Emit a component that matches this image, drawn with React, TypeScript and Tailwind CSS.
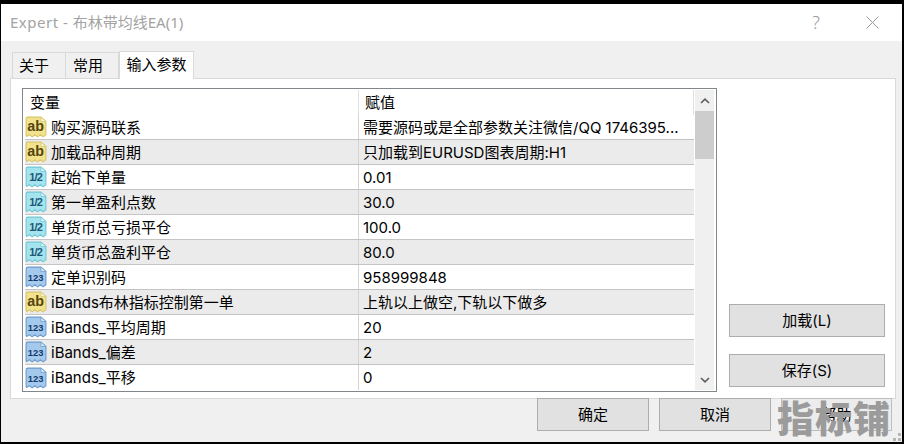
import React from "react";

const FONT = "font-['Inter','Noto_Sans_CJK_SC',sans-serif]";

type Kind = "ab" | "half" | "num";

function ParamIcon({ kind }: { kind: Kind }) {
  const c =
    kind === "ab"
      ? { fill: "#f2e28c", edge: "#d8c76e", light: "#fdf6c8", text: "#54450f" }
      : kind === "half"
      ? { fill: "#a4e4ef", edge: "#74c6d4", light: "#dcf7fb", text: "#1c5a76" }
      : { fill: "#a5c9ed", edge: "#6c9ccb", light: "#dbeaf9", text: "#103a6c" };
  return (
    <svg width="22" height="22" viewBox="0.5 0.5 20 20" className="shrink-0 -mr-px">
      <path
        d="M1.5 3 Q1.5 1.5 3 1.5 H15 L19.5 5.5 V17.5 L17 19.5 L14.5 17.5 L12 19.5 L9.5 17.5 L7 19.5 L4.5 17.5 L2 19 L1.5 18 Z"
        fill={c.fill}
        stroke={c.edge}
        strokeWidth="1"
      />
      <path d="M15 1.5 V5.5 H19.5 Z" fill={c.light} stroke={c.edge} strokeWidth="0.7" />
      <text
        x="10.2"
        y={kind === "ab" ? 14.5 : 14}
        textAnchor="middle"
        fontSize={kind === "ab" ? 13 : kind === "half" ? 10 : 8.5}
        fontWeight="700"
        fill={c.text}
        fontFamily="Liberation Sans, sans-serif"
        letterSpacing={kind === "half" ? -0.8 : 0}
      >
        {kind === "ab" ? "ab" : kind === "half" ? "1/2" : "123"}
      </text>
    </svg>
  );
}

const rows: { k: Kind; n: string; v: string }[] = [
  { k: "ab", n: "购买源码联系", v: "需要源码或是全部参数关注微信/QQ 1746395..." },
  { k: "ab", n: "加载品种周期", v: "只加载到EURUSD图表周期:H1" },
  { k: "half", n: "起始下单量", v: "0.01" },
  { k: "half", n: "第一单盈利点数", v: "30.0" },
  { k: "half", n: "单货币总亏损平仓", v: "100.0" },
  { k: "half", n: "单货币总盈利平仓", v: "80.0" },
  { k: "num", n: "定单识别码", v: "958999848" },
  { k: "ab", n: "iBands布林指标控制第一单", v: "上轨以上做空,下轨以下做多" },
  { k: "num", n: "iBands_平均周期", v: "20" },
  { k: "num", n: "iBands_偏差", v: "2" },
  { k: "num", n: "iBands_平移", v: "0" },
];

function Btn({ label, className = "" }: { label: string; className?: string }) {
  return (
    <div className={`h-[33px] pt-px flex items-center justify-center text-[15px] text-black border ${className}`}>
      {label}
    </div>
  );
}

export default function App() {
  return (
    <div className={`w-[904px] h-[444px] bg-black pt-[4px] pb-[2px] pl-px pr-[2px] overflow-hidden ${FONT}`}>
      <div className="relative h-full flex flex-col bg-[#f0f0f0]">
        {/* title bar */}
        <div className="h-[37px] shrink-0 bg-white flex items-center pl-[9px] text-[#a3a3a3] text-[15px] font-['Noto_Sans','Noto_Sans_CJK_SC',sans-serif]">
          <span className="flex-1">
            <span className="tracking-[0.5px]">Expert - </span>布林带均线EA(1)
          </span>
          <span className="w-[20px] text-center text-[#9a9a9a] text-[18px] mr-[40px] font-light">?</span>
          <svg width="13" height="13" viewBox="0 0 13 13" className="mr-[23px]">
            <path d="M0.5 0.5 L12.5 12.5 M12.5 0.5 L0.5 12.5" stroke="#9a9a9a" strokeWidth="1" fill="none" />
          </svg>
        </div>

        {/* tabs */}
        <div className="h-[37px] shrink-0 flex items-end pl-[11px] text-[15px] text-black">
          <div className="w-[54px] h-[26px] pl-[6px] pt-px bg-[#f0f0f0] border border-b-0 border-[#d9d9d9] flex items-center">关于</div>
          <div className="w-[53px] h-[26px] pl-[7px] pt-px bg-[#f0f0f0] border border-b-0 border-l-0 border-[#d9d9d9] flex items-center">常用</div>
          <div className="w-[75px] h-[28px] -mb-px z-10 bg-white border border-b-0 border-[#d9d9d9] flex items-center justify-center">输入参数</div>
        </div>

        {/* panel */}
        <div className="ml-[9px] mr-[6px] h-[321px] shrink-0 bg-white border border-[#d9d9d9] pt-[9px] pl-[11px] flex">
          {/* table */}
          <div className="w-[695px] h-[304px] border border-[#82878c] flex shrink-0">
            <div className="w-[671px] shrink-0 flex flex-col text-[15px] text-black pt-px pl-[2px]">
              <div className="h-[25px] flex shrink-0">
                <div className="w-[334px] pl-[5px] pt-[2px] border-r border-[#e0e0e0] flex items-center">变量</div>
                <div className="flex-1 pl-[6px] pt-[2px] flex items-center border-r border-[#e0e0e0]">赋值</div>
              </div>
              {rows.map((r, i) => (
                <div key={i} className={`h-[25px] shrink-0 flex border-b border-[#c4c4c4] last:border-b-0 ${i % 2 === 1 ? "bg-[#ebebeb]" : "bg-white"}`}>
                  <div className="w-[334px] flex items-center shrink-0 border-r border-[#d4d4d4]">
                    <ParamIcon kind={r.k} />
                    <span className="ml-[5px] pt-[2px] whitespace-nowrap">{r.n}</span>
                  </div>
                  <span className="pl-[4px] pt-[2px] whitespace-nowrap flex items-center">{r.v}</span>
                </div>
              ))}
            </div>
            {/* scrollbar */}
            <div className="ml-px w-[19px] h-[300px] mt-px shrink-0 bg-[#f0f0f0] flex flex-col">
              <div className="h-[21px] flex items-center justify-center shrink-0">
                <svg width="10" height="6" viewBox="0 0 10 6">
                  <path d="M1 5 L5 1.2 L9 5" stroke="#606060" strokeWidth="1.7" fill="none" />
                </svg>
              </div>
              <div className="h-[48px] bg-[#cdcdcd] shrink-0" />
              <div className="flex-1" />
              <div className="h-[21px] flex items-center justify-center shrink-0">
                <svg width="10" height="6" viewBox="0 0 10 6">
                  <path d="M1 1 L5 4.8 L9 1" stroke="#606060" strokeWidth="1.7" fill="none" />
                </svg>
              </div>
            </div>
          </div>
          {/* side buttons */}
          <div className="ml-[12px] w-[156px] pt-[216px] flex flex-col gap-[17px] shrink-0">
            <Btn label="加载(L)" className="bg-[#e1e1e1] border-[#adadad]" />
            <Btn label="保存(S)" className="bg-[#e1e1e1] border-[#adadad]" />
          </div>
        </div>

        {/* bottom buttons */}
        <div className="flex justify-end gap-[10px] pr-[10px] -mt-px">
          <Btn label="确定" className="w-[112px] bg-[#e1e1e1] border-[#adadad]" />
          <Btn label="取消" className="w-[112px] bg-[#e1e1e1] border-[#adadad]" />
          <Btn label="帮助" className="w-[111px] bg-[#ececec] border-[#bdbdbd]" />
        </div>

        {/* watermark */}
        <div className="absolute right-[11px] bottom-[3px] text-[37px] leading-[44px] tracking-[1px] font-black text-[#9b9b9b] whitespace-nowrap font-['Noto_Sans_CJK_SC',sans-serif]">
          指标铺
        </div>
        {/* size grip */}
        <svg width="8" height="8" viewBox="0 0 8 8" className="absolute right-[1px] bottom-[1px]">
          <rect x="5" y="0" width="3" height="3" fill="#b5b5b5" />
          <rect x="0" y="5" width="3" height="3" fill="#b5b5b5" />
          <rect x="5" y="5" width="3" height="3" fill="#b5b5b5" />
        </svg>
      </div>
    </div>
  );
}
